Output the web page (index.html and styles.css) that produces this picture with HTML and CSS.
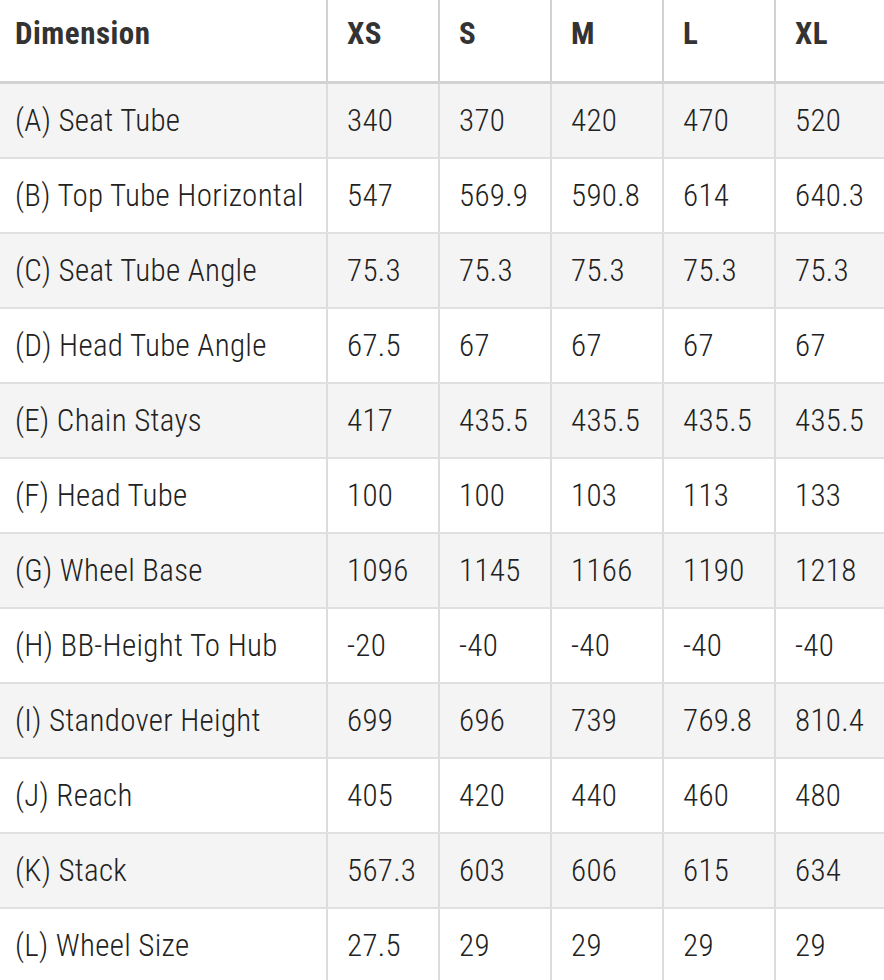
FILE: index.html
```html
<!DOCTYPE html>
<html>
<head>
<meta charset="utf-8">
<link rel="stylesheet" href="styles.css">
</head>
<body>
<table class="geo">
  <colgroup>
    <col class="c-name"><col class="c-size"><col class="c-size"><col class="c-size"><col class="c-size"><col class="c-size">
  </colgroup>
  <thead>
    <tr><th>Dimension</th><th>XS</th><th>S</th><th>M</th><th>L</th><th>XL</th></tr>
  </thead>
  <tbody>
    <tr><td>(A) Seat Tube</td><td>340</td><td>370</td><td>420</td><td>470</td><td>520</td></tr>
    <tr><td>(B) Top Tube Horizontal</td><td>547</td><td>569.9</td><td>590.8</td><td>614</td><td>640.3</td></tr>
    <tr><td>(C) Seat Tube Angle</td><td>75.3</td><td>75.3</td><td>75.3</td><td>75.3</td><td>75.3</td></tr>
    <tr><td>(D) Head Tube Angle</td><td>67.5</td><td>67</td><td>67</td><td>67</td><td>67</td></tr>
    <tr><td>(E) Chain Stays</td><td>417</td><td>435.5</td><td>435.5</td><td>435.5</td><td>435.5</td></tr>
    <tr><td>(F) Head Tube</td><td>100</td><td>100</td><td>103</td><td>113</td><td>133</td></tr>
    <tr><td>(G) Wheel Base</td><td>1096</td><td>1145</td><td>1166</td><td>1190</td><td>1218</td></tr>
    <tr><td>(H) BB-Height To Hub</td><td>-20</td><td>-40</td><td>-40</td><td>-40</td><td>-40</td></tr>
    <tr><td>(I) Standover Height</td><td>699</td><td>696</td><td>739</td><td>769.8</td><td>810.4</td></tr>
    <tr><td>(J) Reach</td><td>405</td><td>420</td><td>440</td><td>460</td><td>480</td></tr>
    <tr><td>(K) Stack</td><td>567.3</td><td>603</td><td>606</td><td>615</td><td>634</td></tr>
    <tr><td>(L) Wheel Size</td><td>27.5</td><td>29</td><td>29</td><td>29</td><td>29</td></tr>
  </tbody>
</table>
</body>
</html>
```
FILE: styles.css
```css
html, body {
  margin: 0;
  padding: 0;
  background: #fff;
}
body {
  width: 884px;
  height: 980px;
  overflow: hidden;
  font-family: Roboto, "Liberation Sans", sans-serif;
  font-stretch: 87%;
}
.geo {
  border-collapse: collapse;
  table-layout: fixed;
  width: 886px;
}
.c-name { width: 327px; }
.c-size { width: 112px; }
.geo th, .geo td {
  text-align: left;
  padding: 0 0 0 19px;
  border-left: 2px solid #dcdcdc;
  white-space: nowrap;
  overflow: hidden;
}
.geo th:first-child, .geo td:first-child {
  border-left: none;
  padding-left: 15px;
}
.geo th {
  height: 82px;
  font-size: 31px;
  font-weight: 700;
  letter-spacing: 0.5px;
  color: #333;
  vertical-align: top;
  padding-top: 15px;
  box-sizing: border-box;
  border-left-color: #d2d2d2;
  border-bottom: 3px solid #d2d2d2;
}
.geo td {
  height: 73px;
  font-size: 31px;
  font-weight: 300;
  letter-spacing: 0.3px;
  color: #222;
  vertical-align: middle;
  border-bottom: 2px solid #e0e0e0;
}
.geo tbody tr:nth-child(odd) td {
  background: #f4f4f4;
}
```
